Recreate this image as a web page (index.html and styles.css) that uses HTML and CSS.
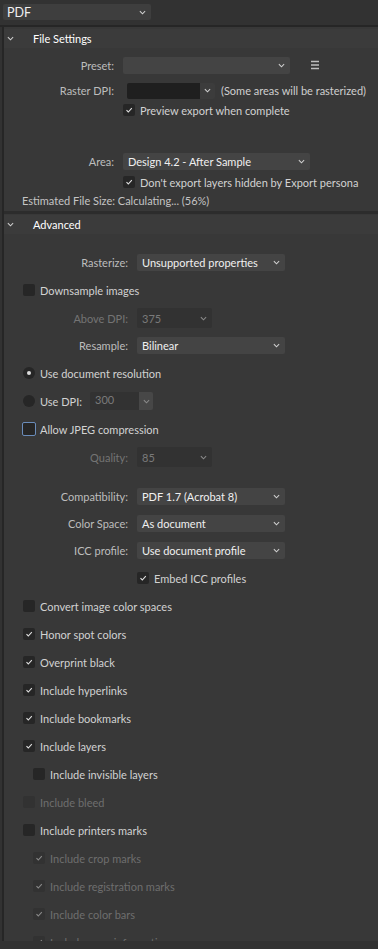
FILE: index.html
```html
<!DOCTYPE html>
<html lang="en">
<head>
    <meta charset="UTF-8">
    <meta name="viewport" content="width=device-width, initial-scale=1.0">
    <title>Export - PDF</title>
    <link rel="stylesheet" href="styles.css">
</head>
<body>

    <!-- Format selector -->
    <div class="topbar">
        <div class="select format">
            <span>PDF</span>
            <svg class="chev" viewBox="0 0 8 5"><path d="M1 1 L4 4 L7 1"/></svg>
        </div>
    </div>

    <div class="panel">

        <!-- File Settings -->
        <div class="section-head">
            <svg class="chev head-chev" viewBox="0 0 8 5"><path d="M1 1 L4 4 L7 1"/></svg>
            <span>File Settings</span>
        </div>

        <div class="section file-settings">
            <div class="row row-preset">
                <label class="lbl">Preset:</label>
                <div class="select preset"><span></span>
                    <svg class="chev" viewBox="0 0 8 5"><path d="M1 1 L4 4 L7 1"/></svg>
                </div>
                <svg class="menu" viewBox="0 0 8 10"><path d="M0 1.5 H8 M0 5 H8 M0 8.5 H8"/></svg>
            </div>
            <div class="row row-dpi">
                <label class="lbl">Raster DPI:</label>
                <div class="combo">
                    <div class="combo-input dark"></div>
                    <div class="combo-btn">
                        <svg class="chev" viewBox="0 0 8 5"><path d="M1 1 L4 4 L7 1"/></svg>
                    </div>
                </div>
                <span class="note">(Some areas will be rasterized)</span>
            </div>
            <div class="row row-check indent-fs">
                <span class="box checked"><svg viewBox="0 0 10 10"><path d="M2.5 5.2 L4.3 7 L7.8 3.2"/></svg></span>
                <span class="txt">Preview export when complete</span>
            </div>

            <div class="row row-area">
                <label class="lbl">Area:</label>
                <div class="select area"><span>Design 4.2 - After Sample</span>
                    <svg class="chev" viewBox="0 0 8 5"><path d="M1 1 L4 4 L7 1"/></svg>
                </div>
            </div>
            <div class="row row-check hidden-layers indent-fs">
                <span class="box checked"><svg viewBox="0 0 10 10"><path d="M2.5 5.2 L4.3 7 L7.8 3.2"/></svg></span>
                <span class="txt">Don't export layers hidden by Export persona</span>
            </div>
            <div class="estimate">Estimated File Size: Calculating... (56%)</div>
        </div>

        <!-- Advanced -->
        <div class="section-head">
            <svg class="chev head-chev" viewBox="0 0 8 5"><path d="M1 1 L4 4 L7 1"/></svg>
            <span>Advanced</span>
        </div>

        <div class="section advanced">
            <div class="row">
                <label class="lbl wide">Rasterize:</label>
                <div class="select adv"><span>Unsupported properties</span>
                    <svg class="chev" viewBox="0 0 8 5"><path d="M1 1 L4 4 L7 1"/></svg>
                </div>
            </div>
            <div class="row">
                <span class="box"></span>
                <span class="txt">Downsample images</span>
            </div>
            <div class="row">
                <label class="lbl wide off">Above DPI:</label>
                <div class="select small off"><span>375</span>
                    <svg class="chev" viewBox="0 0 8 5"><path d="M1 1 L4 4 L7 1"/></svg>
                </div>
            </div>
            <div class="row short">
                <label class="lbl wide">Resample:</label>
                <div class="select adv"><span>Bilinear</span>
                    <svg class="chev" viewBox="0 0 8 5"><path d="M1 1 L4 4 L7 1"/></svg>
                </div>
            </div>
            <div class="row">
                <span class="radio on"></span>
                <span class="txt">Use document resolution</span>
            </div>
            <div class="row">
                <span class="radio"></span>
                <span class="txt">Use DPI:</span>
                <div class="combo dpi">
                    <div class="combo-input off-input">300</div>
                    <div class="combo-btn lighter">
                        <svg class="chev" viewBox="0 0 8 5"><path d="M1 1 L4 4 L7 1"/></svg>
                    </div>
                </div>
            </div>
            <div class="row">
                <span class="box focus"></span>
                <span class="txt">Allow JPEG compression</span>
            </div>
            <div class="row">
                <label class="lbl wide off">Quality:</label>
                <div class="select small off"><span>85</span>
                    <svg class="chev" viewBox="0 0 8 5"><path d="M1 1 L4 4 L7 1"/></svg>
                </div>
            </div>

            <div class="row short gap-top">
                <label class="lbl wide">Compatibility:</label>
                <div class="select adv"><span>PDF 1.7 (Acrobat 8)</span>
                    <svg class="chev" viewBox="0 0 8 5"><path d="M1 1 L4 4 L7 1"/></svg>
                </div>
            </div>
            <div class="row short">
                <label class="lbl wide">Color Space:</label>
                <div class="select adv"><span>As document</span>
                    <svg class="chev" viewBox="0 0 8 5"><path d="M1 1 L4 4 L7 1"/></svg>
                </div>
            </div>
            <div class="row short">
                <label class="lbl wide">ICC profile:</label>
                <div class="select adv"><span>Use document profile</span>
                    <svg class="chev" viewBox="0 0 8 5"><path d="M1 1 L4 4 L7 1"/></svg>
                </div>
            </div>
            <div class="row indent-adv">
                <span class="box checked"><svg viewBox="0 0 10 10"><path d="M2.5 5.2 L4.3 7 L7.8 3.2"/></svg></span>
                <span class="txt">Embed ICC profiles</span>
            </div>

            <div class="row">
                <span class="box"></span>
                <span class="txt">Convert image color spaces</span>
            </div>
            <div class="row">
                <span class="box checked"><svg viewBox="0 0 10 10"><path d="M2.5 5.2 L4.3 7 L7.8 3.2"/></svg></span>
                <span class="txt">Honor spot colors</span>
            </div>
            <div class="row">
                <span class="box checked"><svg viewBox="0 0 10 10"><path d="M2.5 5.2 L4.3 7 L7.8 3.2"/></svg></span>
                <span class="txt">Overprint black</span>
            </div>
            <div class="row">
                <span class="box checked"><svg viewBox="0 0 10 10"><path d="M2.5 5.2 L4.3 7 L7.8 3.2"/></svg></span>
                <span class="txt">Include hyperlinks</span>
            </div>
            <div class="row">
                <span class="box checked"><svg viewBox="0 0 10 10"><path d="M2.5 5.2 L4.3 7 L7.8 3.2"/></svg></span>
                <span class="txt">Include bookmarks</span>
            </div>
            <div class="row">
                <span class="box checked"><svg viewBox="0 0 10 10"><path d="M2.5 5.2 L4.3 7 L7.8 3.2"/></svg></span>
                <span class="txt">Include layers</span>
            </div>
            <div class="row sub">
                <span class="box"></span>
                <span class="txt">Include invisible layers</span>
            </div>
            <div class="row disabled">
                <span class="box"></span>
                <span class="txt">Include bleed</span>
            </div>
            <div class="row">
                <span class="box"></span>
                <span class="txt">Include printers marks</span>
            </div>
            <div class="row sub disabled">
                <span class="box checked"><svg viewBox="0 0 10 10"><path d="M2.5 5.2 L4.3 7 L7.8 3.2"/></svg></span>
                <span class="txt">Include crop marks</span>
            </div>
            <div class="row sub disabled">
                <span class="box checked"><svg viewBox="0 0 10 10"><path d="M2.5 5.2 L4.3 7 L7.8 3.2"/></svg></span>
                <span class="txt">Include registration marks</span>
            </div>
            <div class="row sub disabled">
                <span class="box checked"><svg viewBox="0 0 10 10"><path d="M2.5 5.2 L4.3 7 L7.8 3.2"/></svg></span>
                <span class="txt">Include color bars</span>
            </div>
            <div class="row sub disabled">
                <span class="box checked"><svg viewBox="0 0 10 10"><path d="M2.5 5.2 L4.3 7 L7.8 3.2"/></svg></span>
                <span class="txt">Include page information</span>
            </div>
        </div>
    </div>

</body>
</html>
```

FILE: styles.css
```css
/* Base */
* {
    margin: 0;
    padding: 0;
    box-sizing: border-box;
}

html, body {
    height: 100%;
}

body {
    background-color: #323232;
    font-family: 'Lato', 'Open Sans', sans-serif;
    font-size: 11px;
    color: #cfcfcf;
    white-space: nowrap;
    overflow: hidden;
}

/* Chevrons */
.chev {
    width: 7px;
    height: 5px;
    fill: none;
    stroke: #cfcfcf;
    stroke-width: 1.2;
}

/* Top format bar */
.topbar {
    height: 27px;
    padding: 4px 0 0 3px;
    border-bottom: 2px solid #262626;
}

.select {
    display: flex;
    align-items: center;
    justify-content: space-between;
    height: 17px;
    padding: 0 5px 0 5px;
    background-color: #444444;
    border-radius: 2px;
    color: #f0f0f0;
}

.select.format {
    width: 148px;
    height: 16px;
    background-color: #3e3e3e;
    font-size: 12.5px;
    padding-left: 4px;
}

/* Panel */
.panel {
    height: 914px;
    margin-left: 2px;
    padding-top: 1px;
    border-left: 2px solid #262626;
    background-color: #383838;
    overflow: hidden;
}

.section-head {
    display: flex;
    align-items: center;
    height: 19px;
    margin-top: 1px;
    background-color: #3b3b3b;
    color: #ffffff;
}

.head-chev {
    margin: 0 19px 0 3px;
}

.section {
    padding-left: 4px;
}

/* Rows */
.row {
    display: flex;
    align-items: center;
    height: 28px;
    padding-left: 12px;
}

.row.short {
    height: 27px;
}

.row.sub {
    padding-left: 22px;
}

.lbl {
    flex: none;
    width: 92px;
    margin-left: 2px;
    margin-right: 9px;
    text-align: right;
    color: #bdbdbd;
}

.lbl.wide {
    width: 106px;
}

.lbl.off {
    color: #747474;
}

.txt {
    margin-left: 5px;
    color: #d2d2d2;
}

.note {
    margin-left: 6px;
    color: #cfcfcf;
}

/* File settings rows */
.file-settings {
    padding-top: 4px;
    padding-bottom: 2px;
    border-bottom: 3px solid #2c2c2c;
}

.row-preset {
    height: 26px;
}

.row-dpi {
    height: 25px;
}

.row-check {
    height: 14px;
}

.row-check.hidden-layers {
    margin-top: 4px;
}

.indent-fs {
    padding-left: 112px;
}

.indent-adv {
    padding-left: 126px;
}

.row-area {
    height: 19px;
    margin-top: 35px;
}

.select.preset {
    width: 167px;
}

.select.area {
    width: 187px;
}

.menu {
    width: 8px;
    height: 10px;
    margin-left: 21px;
    stroke: #bdbdbd;
    stroke-width: 1.6;
}

.combo {
    display: flex;
    height: 16px;
    margin-left: 4px;
}

.combo-input {
    width: 73px;
    background-color: #1f1f1f;
    border-radius: 2px 0 0 2px;
}

.combo-btn {
    display: flex;
    align-items: center;
    justify-content: center;
    width: 15px;
    background-color: #3c3c3c;
    border-radius: 0 2px 2px 0;
}

.estimate {
    height: 15px;
    margin: 5px 0 0 14px;
    color: #c4c4c4;
}

/* Advanced rows */
.advanced {
    padding-top: 14px;
}

.select.adv {
    width: 148px;
}

.select.small {
    width: 75px;
    height: 20px;
}

.select.off {
    background-color: #323232;
    color: #7a7a7a;
}

.select.off .chev {
    stroke: #8a8a8a;
}

.gap-top {
    margin-top: 12px;
}

.combo.dpi {
    height: 18px;
    margin-left: 8px;
}

.combo.dpi .combo-input {
    width: 49px;
    padding: 1px 0 0 5px;
    background-color: #323232;
    color: #7a7a7a;
}

.combo-btn.lighter {
    width: 14px;
    background-color: #474747;
}

.combo-btn.lighter .chev {
    stroke: #8a8a8a;
}

/* Checkboxes and radios */
.box {
    flex: none;
    display: flex;
    align-items: center;
    justify-content: center;
    width: 12px;
    height: 12px;
    margin-left: 3px;
    background-color: #262626;
    border-radius: 2px;
}

.box svg {
    width: 10px;
    height: 10px;
    fill: none;
    stroke: #e2e2e2;
    stroke-width: 1.1;
}

.box.focus {
    width: 14px;
    height: 14px;
    margin-left: 2px;
    margin-right: -1px;
    border: 1px solid #6a8cba;
}

.radio {
    flex: none;
    display: flex;
    align-items: center;
    justify-content: center;
    width: 12px;
    height: 12px;
    margin-left: 3px;
    background-color: #262626;
    border-radius: 50%;
}

.radio.on::after {
    content: '';
    width: 4px;
    height: 4px;
    border-radius: 50%;
    background-color: #dcdcdc;
}

.row.disabled .txt {
    color: #6e6e6e;
}

.row.disabled .box {
    background-color: #323232;
}

.row.disabled .box svg {
    stroke: #8a8a8a;
}
```
